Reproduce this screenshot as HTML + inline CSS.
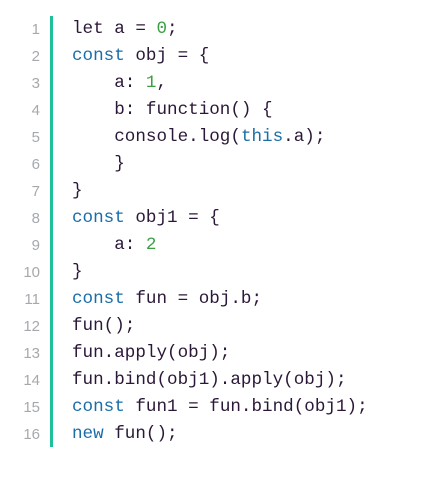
<!DOCTYPE html>
<html><head><meta charset="utf-8"><style>
html,body{margin:0;padding:0;background:#fff;width:425px;height:489px;overflow:hidden}
.bar{position:absolute;left:50px;top:16px;width:3px;height:431px;background:#1fbf9a}
.ln{position:absolute;left:0;width:40px;text-align:right;color:#9aa0a6;font:15px "Liberation Sans",sans-serif}
.code{position:absolute;left:72px;top:16px;font:17.6px/27px "Liberation Mono",monospace;color:#2b1838;white-space:pre;margin:0}
.k{color:#1a6ea8}.n{color:#3aa043}
.nums{position:absolute;left:0;top:16px;font:15px/27px "Liberation Sans",sans-serif;color:#a5a9ad;text-align:right;width:40px;white-space:pre;margin:0}
</style></head><body>
<div class="bar"></div>
<pre class="nums">1
2
3
4
5
6
7
8
9
10
11
12
13
14
15
16</pre>
<pre class="code">let a = <span class="n">0</span>;
<span class="k">const</span> obj = {
    a: <span class="n">1</span>,
    b: function() {
    console.log(<span class="k">this</span>.a);
    }
}
<span class="k">const</span> obj1 = {
    a: <span class="n">2</span>
}
<span class="k">const</span> fun = obj.b;
fun();
fun.apply(obj);
fun.bind(obj1).apply(obj);
<span class="k">const</span> fun1 = fun.bind(obj1);
<span class="k">new</span> fun();</pre>
</body></html>
